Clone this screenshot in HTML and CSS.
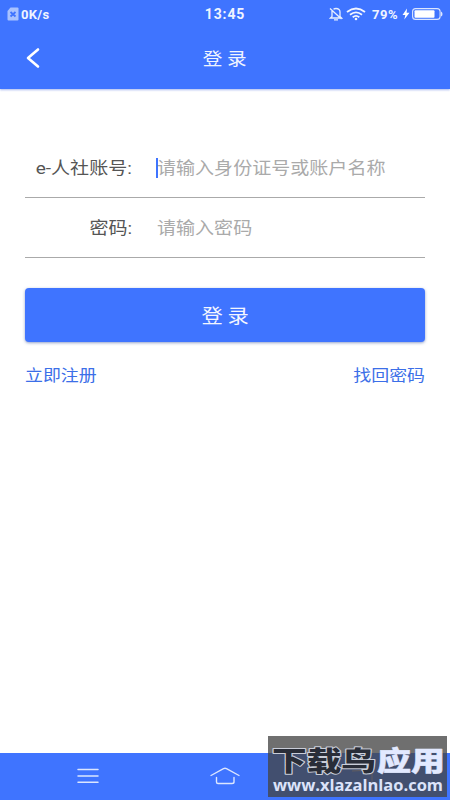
FILE: index.html
```html
<!DOCTYPE html>
<html lang="zh-CN">
<head>
<meta charset="UTF-8">
<title>登录</title>
<link rel="stylesheet" href="styles.css">
</head>
<body>
<div class="screen">
  <header class="header">
    <div class="status">
      <div class="status-left">
        <svg class="sim" width="12" height="14" viewBox="0 0 12 14"><path d="M3.5 .5H10.5Q11.5 .5 11.5 1.5V12.5Q11.5 13.5 10.5 13.5H1.500Q.5 13.500 .5 12.500V4Z" fill="#a9c2ff"/><path d="M3.500 5L8.500 9.500M8.500 5L3.500 9.500" stroke="#3f74ff" stroke-width="1.800"/></svg>
        <span class="speed">0K/s</span>
      </div>
      <span class="time">13:45</span>
      <div class="status-right">
        <svg width="14" height="14" viewBox="0 0 14 14" fill="none" stroke="#e8efff" stroke-width="1.300"><path d="M3 4V9.500L1.500 11H12.500L11 9.500V5Q11 1.500 7 1.500Q5.500 1.500 4.500 2.300M5 12.800H9M1 1.500L12.500 12"/></svg>
        <svg class="wifi" width="20" height="14" viewBox="0 0 20 14" fill="none" stroke="#f3f6ff" stroke-width="1.800"><path d="M1 5Q10-2 19 5M4 7.700Q10 3 16 7.700M6.700 10.200Q10 7.600 13.300 10.200"/><circle cx="10" cy="12" r="1.300" fill="#f3f6ff" stroke="none"/></svg>
        <span class="percent">79%</span>
        <svg class="bolt" width="8" height="12" viewBox="0 0 8 12"><path d="M5 .5L.5 7H3.300L2.300 11.500L7.500 4.800H4.600Z" fill="#fff"/></svg>
        <svg width="31" height="12" viewBox="0 0 31 12"><rect x=".6" y=".6" width="27.500" height="10.800" rx="3" fill="none" stroke="#dce6ff" stroke-width="1.100"/><rect x="2.500" y="2.300" width="20" height="7.400" rx="1" fill="#fff"/><path d="M29 3.500Q30.500 4 30.500 6T29 8.500Z" fill="#dce6ff"/></svg>
      </div>
    </div>
    <div class="titlebar">
      <svg class="back" width="17" height="22" viewBox="0 0 17 22"><path d="M14 2.500L4 11L14 19.500" fill="none" stroke="#fff" stroke-width="2.600" stroke-linecap="round" stroke-linejoin="round"/></svg>
      <h1 class="title"><span class="wide">登 录</span></h1>
    </div>
  </header>
  <main class="form">
    <div class="field">
      <label class="label"><span class="wide">e-人社账号:</span></label>
      <div class="entry focused"><span class="wide">请输入身份证号或账户名称</span></div>
    </div>
    <div class="field">
      <label class="label"><span class="wide">密码:</span></label>
      <div class="entry"><span class="wide">请输入密码</span></div>
    </div>
    <button class="submit"><span class="wide">登 录</span></button>
    <div class="links">
      <a class="link register"><span class="wide">立即注册</span></a>
      <a class="link recover"><span class="wide">找回密码</span></a>
    </div>
  </main>
  <nav class="nav">
    <svg class="menu" width="22" height="18" viewBox="0 0 22 18"><path d="M1 2.500H21M1 9H21M1 15.300H21" stroke="#dce6ff" stroke-width="1.500" stroke-linecap="round"/></svg>
    <svg class="home" width="30" height="18" viewBox="0 0 30 18" fill="none" stroke="#dce6ff" stroke-width="1.400" stroke-linecap="round" stroke-linejoin="round"><path d="M1 8.500L13.500 1.600Q15 1 16.500 1.600L29 8.500M6.500 10.500V15Q6.500 16.500 8 16.500H22Q24 16.500 24 15V10.500"/></svg>
  </nav>
  <div class="watermark">
    <svg width="179" height="61" viewBox="0 0 179 61">
      <path d="M84 35L104 34V48" fill="none" stroke="#625d60"/>
      <text class="mark-dark" x="4" y="35" textLength="104" lengthAdjust="spacingAndGlyphs">下载鸟</text>
      <text class="mark-light" x="109" y="35" textLength="68" lengthAdjust="spacingAndGlyphs">应用</text>
      <text class="mark-url" x="5" y="55" textLength="170" lengthAdjust="spacingAndGlyphs">www.xlazalnlao.com</text>
    </svg>
  </div>
</div>
</body>
</html>
```
FILE: styles.css
```css
* { box-sizing: border-box; }
body { margin: 0; background: #fff; font-family: Roboto, "Noto Sans CJK SC", sans-serif; }
.screen { position: relative; width: 450px; height: 800px; overflow: hidden; display: flex; flex-direction: column; }
svg { display: block; }
.wide { display: inline-block; transform: scaleX(1.12); transform-origin: left center; white-space: nowrap; }
.header { height: 89px; background: #3f74ff; color: #f0f4ff; box-shadow: 0 1px 2px rgba(63, 100, 220, .45); }
.status { height: 28px; padding: 0 7px; display: grid; grid-template-columns: 1fr auto 1fr; align-items: center; font-weight: 700; }
.status-left, .status-right { display: flex; align-items: center; }
.status-right { justify-content: flex-end; }
.speed { margin-left: 2px; font-size: 13px; letter-spacing: .3px; }
.time { font-size: 14px; letter-spacing: .9px; }
.wifi { margin: 0 6px 0 3px; }
.percent { font-size: 13px; letter-spacing: .5px; }
.bolt { margin: 0 2px 0 4px; }
.titlebar { height: 60px; display: grid; grid-template-columns: 50px 1fr 50px; align-items: center; }
.back { margin-left: 24px; }
.title { margin: 0; padding-bottom: 2px; font-size: 17.500px; font-weight: 400; text-align: center; }
.title .wide, .submit .wide { transform-origin: center; }
.form { flex: 1; padding: 49px 25px 0; }
.field { height: 60px; display: flex; align-items: center; border-bottom: 1px solid #aaa; font-size: 17px; }
.label { width: 107px; padding-bottom: 2px; text-align: right; color: #555; }
.label .wide { transform-origin: right center; }
.entry { height: 20px; line-height: 20px; margin-left: 24px; padding-left: .5px; color: #aaa; position: relative; }
.entry.focused::before { content: ""; position: absolute; left: 0; top: 0; width: 2px; height: 20px; background: #3f74ff; }
.submit { display: block; width: 400px; height: 54px; margin-top: 30px; padding: 0 0 2px; border: 0; border-radius: 4px; background: #3f74ff; color: #f3f6ff; font: 400 19px "Noto Sans CJK SC", sans-serif; box-shadow: 0 1px 3px rgba(40, 70, 150, .5); }
.links { margin-top: 22px; display: flex; justify-content: space-between; font-size: 16px; line-height: 24px; color: #3c6fe8; }
.recover .wide { transform-origin: right center; }
.nav { height: 47px; background: #3f74ff; display: flex; padding: 14px 0 0 77px; }
.home { margin-left: 111px; }
.watermark { position: absolute; left: 268px; top: 736px; width: 179px; height: 61px; background: rgba(68, 68, 68, .77); }
.mark-dark, .mark-light { font: 900 27px "Noto Sans CJK SC", sans-serif; paint-order: stroke; stroke-linejoin: round; }
.mark-dark { fill: #292d38; stroke: #c9cdd8; stroke-width: 2px; }
.mark-light { fill: #e2e9ff; stroke: #e2e9ff; stroke-width: .5px; }
.mark-url { font: 700 16px "Open Sans", sans-serif; fill: #dce3fa; }
```
